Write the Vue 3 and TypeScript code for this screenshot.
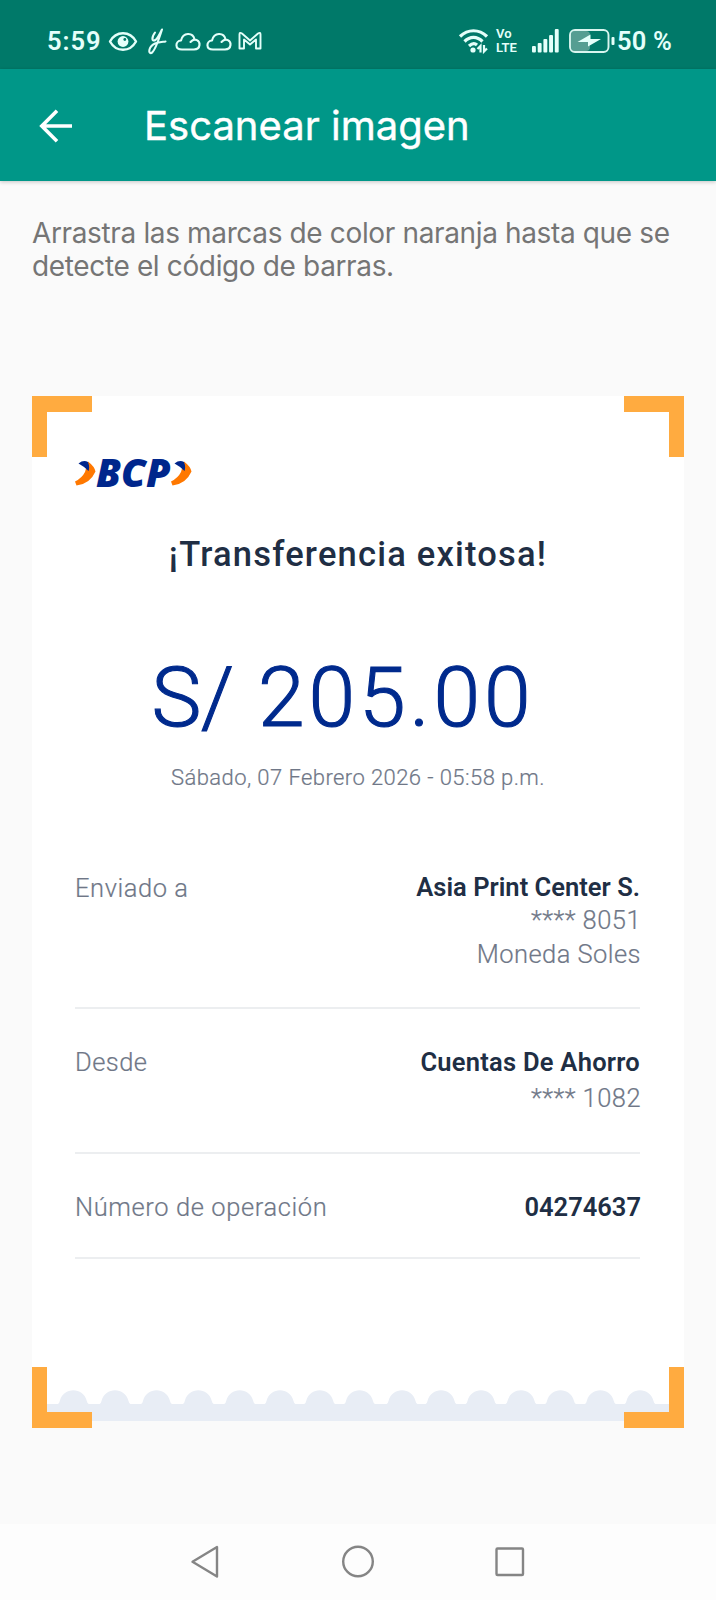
<script setup lang="ts">
interface Detail {
  label: string
  title: string
  lines: string[]
  kind: string
}

const details: Detail[] = [
  { label: 'Enviado a', title: 'Asia Print Center S.', lines: ['**** 8051', 'Moneda Soles'], kind: 'recipient' },
  { label: 'Desde', title: 'Cuentas De Ahorro', lines: ['**** 1082'], kind: 'origin' },
  { label: 'Número de operación', title: '04274637', lines: [], kind: 'operation' },
]

// Horizontal centres of the scallops along the torn edge
const scallops: number[] = [41.3, 83, 124.5, 166.3, 207.7, 248, 287.7, 327.5, 370, 409, 449, 489, 528.5, 568.3, 608]
</script>

<template>
  <div class="screen">
    <div class="status">
      <span class="clock">5:59</span>
      <svg class="left-icons" width="160" height="30" viewBox="0 0 160 30" fill="none" stroke="#e4fffa" stroke-width="2.1" stroke-linecap="round" stroke-linejoin="round">
        <path d="M2 15.5C8 4.500 22 4.500 28 15.500C22 26.500 8 26.500 2 15.500Z" stroke-width="2.400" />
        <circle cx="15" cy="15.500" r="5.400" fill="#e4fffa" stroke="none" />
        <circle cx="16.800" cy="13.500" r="1.400" fill="#007969" stroke="none" />
        <path d="M47 6.500C43 12 44 16 47.500 14C50 12 52 7 54 3.500C51 13 47 25 43.500 27C39.500 28 41 20 47 17.500C51 16 54 16 57.500 15.500" />
        <path d="M74 23.500C66.500 23.500 67 15 73 14.500C75 6 85 6 86.500 13.500M82.500 16C87 11 92 15 91.500 19C91 23 88.500 23.500 86 23.500H74" />
        <path d="M105 23.500C97.500 23.500 98 15 104 14.500C106 6 116 6 117.500 13.500M113.500 16C118 11 123 15 122.500 19C122 23 119.500 23.500 117 23.500H105" />
        <path d="M131.500 22.500V8.500Q131.500 6 134 7.500L142 14.500L150 7.500Q152.500 6 152.500 8.500V22.500H148V13.500L142 18.500L136 13.500V22.500Z" stroke-width="1.900" />
      </svg>
      <div class="right-icons">
        <svg width="32" height="26" viewBox="0 0 32 26" fill="none" stroke="#e4fffa" stroke-width="3.200">
          <path d="M2 8.500C10 .8 21 .8 29 8.500M6.500 13.500C12 8 19 8 24.500 13.500M11 18Q15.500 14 19 17" />
          <circle cx="15" cy="22" r="2.600" fill="#e4fffa" stroke="none" />
          <path d="M19.500 21L22.500 18V24.500M26 17V23.500L29 20.500" stroke-width="2.200" />
        </svg>
        <span class="volte"><span>Vo</span><span>LTE</span></span>
        <svg class="signal" width="28" height="24" viewBox="0 0 28 24" fill="#e4fffa">
          <rect x="0" y="17" width="3.900" height="6.500" rx="1" />
          <rect x="5.700" y="14" width="3.900" height="9.500" rx="1" />
          <rect x="11.400" y="10" width="3.900" height="13.500" rx="1" />
          <rect x="17.100" y="6" width="3.900" height="17.500" rx="1" />
          <rect x="22.800" y="0" width="3.900" height="23.500" rx="1" />
        </svg>
        <svg class="battery" width="46" height="24" viewBox="0 0 46 24">
          <rect x="2" y="2" width="19" height="20" rx="4" fill="#559e92" />
          <rect x="1" y="1" width="38.500" height="22" rx="5" fill="none" stroke="#d8f5ef" stroke-width="1.900" />
          <path d="M8.500 13L21.500 5.500V10H32L19 17.500V13Z" fill="#e4fffa" />
          <rect x="42.500" y="8" width="3" height="8" rx="1" fill="#e4fffa" />
        </svg>
        <span class="percent">50 %</span>
      </div>
    </div>

    <header class="toolbar">
      <svg width="34" height="34" viewBox="0 0 34 34" fill="none" stroke="#fff" stroke-width="3.600">
        <path d="M33 17H3M18 1.800L2.800 17L18 32.200" />
      </svg>
      <h1>Escanear imagen</h1>
    </header>

    <main class="content">
      <p class="hint">Arrastra las marcas de color naranja hasta que se<br />detecte el código de barras.</p>

      <section class="receipt">
        <i class="corner top left"></i>
        <i class="corner top right"></i>
        <i class="corner bottom left"></i>
        <i class="corner bottom right"></i>

        <div class="logo">
          <svg width="21" height="26" viewBox="0 0 21 26">
            <path d="M13 1.500Q19.500 6.500 20.500 11.500Q15 24 1.500 25.500L0 21.500Q7 18 10 12Z" fill="#ff7800" />
            <path d="M3.500 3.500Q8.500 -.5 13 2Q15 7 13.500 11Q10 7 3.500 3.500Z" fill="#00268c" />
          </svg>
          <span class="wordmark">BCP</span>
          <svg width="21" height="26" viewBox="0 0 21 26">
            <path d="M13 1.500Q19.500 6.500 20.500 11.500Q15 24 1.500 25.500L0 21.500Q7 18 10 12Z" fill="#ff7800" />
            <path d="M3.500 3.500Q8.500 -.5 13 2Q15 7 13.500 11Q10 7 3.500 3.500Z" fill="#00268c" />
          </svg>
        </div>

        <h2>¡Transferencia exitosa!</h2>
        <div class="amount"><span class="currency">S/</span> 205.00</div>
        <div class="date">Sábado, 07 Febrero 2026 - 05:58 p.m.</div>

        <div class="details">
          <div v-for="item in details" :key="item.label" class="row" :class="item.kind">
            <span class="label">{{ item.label }}</span>
            <div class="value">
              <strong>{{ item.title }}</strong>
              <span v-for="line in item.lines" :key="line">{{ line }}</span>
            </div>
          </div>
        </div>

        <svg class="edge" width="652" height="31" viewBox="0 0 652 31" fill="#e8edf5">
          <rect y="14" width="652" height="17" />
          <path v-for="x in scallops" :key="x" :d="`M${x - 16} 14.500Q${x - 14} 14 ${x - 13.500} 11C${x - 10} -3.300 ${x + 10} -3.300 ${x + 13.500} 11Q${x + 14} 14 ${x + 16} 14.500Z`" />
        </svg>
      </section>
    </main>

    <nav class="navbar">
      <svg width="340" height="36" viewBox="0 0 340 36" fill="none" stroke="#858585" stroke-width="2.400" stroke-linejoin="round">
        <path d="M27 3V32.500L2.500 17.800Z" />
        <circle cx="168" cy="17.500" r="14.800" />
        <rect x="306.500" y="4.500" width="26.500" height="26.500" rx="1" />
      </svg>
    </nav>
  </div>
</template>

<style>
body {
  margin: 0;
  background: #fafafa;
}
</style>

<style scoped>
.screen {
  width: 716px;
  height: 1600px;
  display: flex;
  flex-direction: column;
  background: #fafafa;
  font-family: Inter, "Noto Sans", sans-serif;
  overflow: hidden;
}
.status {
  box-sizing: border-box;
  height: 69px;
  flex: none;
  padding: 0 43px 0 47px;
  display: flex;
  align-items: center;
  background: #007969;
  color: #e4fffa;
}
.clock,
.percent {
  font: 600 25.500px/30px Roboto, sans-serif;
  white-space: nowrap;
  margin-top: 13px;
}
.clock {
  width: 61px;
  letter-spacing: 1px;
}
.left-icons {
  margin-top: 12px;
}
.right-icons {
  margin: 13px 0 0 auto;
  display: flex;
  align-items: center;
}
.volte {
  display: flex;
  flex-direction: column;
  gap: 1px;
  margin: -1px 0 0 6px;
  width: 36px;
  font: 600 13px/13px Roboto, sans-serif;
}
.percent {
  margin: 0 0 0 2px;
  width: 56px;
  letter-spacing: 0.200px;
}
.battery {
  margin-left: 9px;
}
.toolbar {
  box-sizing: border-box;
  height: 112px;
  flex: none;
  padding: 1px 0 0 39px;
  display: flex;
  align-items: center;
  gap: 71px;
  background: #009788;
  color: #fff;
  position: relative;
  box-shadow: 0 1px 4px rgba(0, 0, 0, 0.22);
}
h1 {
  margin: 1px 0 0;
  font-size: 40px;
  font-weight: 400;
  line-height: 48px;
  -webkit-text-stroke: 0.400px #fff;
}
.content {
  flex: 1;
}
.hint {
  margin: 0;
  height: 179px;
  padding: 36px 0 0 32px;
  color: #757575;
  font-size: 28px;
  line-height: 32.500px;
  white-space: nowrap;
  letter-spacing: -0.360px;
}
.receipt {
  position: relative;
  box-sizing: border-box;
  width: 652px;
  height: 1025px;
  margin: 0 32px;
  padding: 60px 44px 0;
  background: #fff;
  color: #6f7787;
  font-family: Roboto, sans-serif;
}
.corner {
  position: absolute;
  z-index: 1;
  box-sizing: border-box;
  width: 60px;
  height: 61px;
  border: 0 solid #ffab40;
}
.top {
  top: 0;
  border-top-width: 16px;
}
.bottom {
  bottom: -7px;
  border-bottom-width: 16px;
}
.left {
  left: 0;
  border-left-width: 15px;
}
.right {
  right: 0;
  border-right-width: 15px;
}
.logo {
  display: flex;
  align-items: center;
  height: 33px;
  margin-left: -1px;
}
.wordmark {
  width: 75px;
  box-sizing: border-box;
  color: #00268c;
  font: italic 800 39.500px/33px "Open Sans", sans-serif;
}
h2 {
  margin: 45px 0 0;
  height: 40px;
  color: #202e44;
  font-size: 34.500px;
  font-weight: 500;
  line-height: 40px;
  text-align: center;
  letter-spacing: 1.200px;
}
.amount {
  margin: 74px 0 0 -30px;
  height: 100px;
  color: #002a8d;
  font-size: 84px;
  font-weight: 300;
  line-height: 100px;
  text-align: center;
  letter-spacing: 3.900px;
  white-space: pre;
  -webkit-text-stroke: 1.100px #002a8d;
}
.currency {
  letter-spacing: -0.500px;
}
.date {
  margin-top: 16px;
  height: 28px;
  font-size: 22px;
  font-weight: 300;
  line-height: 28px;
  text-align: center;
  letter-spacing: 0.420px;
  -webkit-text-stroke: 0.200px #6f7787;
}
.details {
  margin-top: 79px;
}
.row {
  box-sizing: border-box;
  display: flex;
  justify-content: space-between;
  width: 565px;
  margin-left: -1px;
  border-bottom: 2px solid #eceef0;
  font-size: 25.500px;
  font-weight: 300;
  line-height: 34px;
  letter-spacing: 0.450px;
}
.row span {
  -webkit-text-stroke: 0.200px #6f7787;
}
.value {
  display: flex;
  flex-direction: column;
  align-items: flex-end;
}
.value span {
  margin-right: -1px;
}
.value strong {
  color: #202e44;
  font-weight: 600;
}
.recipient {
  height: 138px;
}
.recipient strong {
  height: 33px;
  margin-top: -1px;
  letter-spacing: 0.020px;
}
.recipient .label {
  letter-spacing: 0.550px;
}
.origin {
  height: 145px;
  padding-top: 36px;
}
.origin strong {
  height: 36px;
  letter-spacing: 0.250px;
}
.operation {
  height: 105px;
  padding-top: 36px;
}
.operation .label {
  letter-spacing: 0.600px;
}
.operation strong {
  letter-spacing: 0;
  margin-right: -1px;
}
.edge {
  position: absolute;
  left: 0;
  bottom: 0;
}
.navbar {
  height: 76px;
  flex: none;
  display: flex;
  align-items: center;
  justify-content: flex-start;
  padding-left: 190px;
  background: #fdfdfd;
}
</style>
